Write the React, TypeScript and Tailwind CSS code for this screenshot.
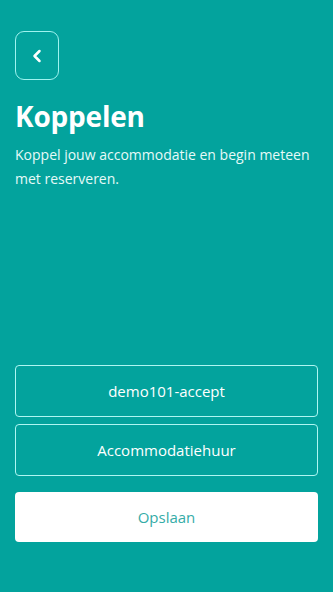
import { ChevronLeft } from 'lucide-react'

export default function App() {
  return (
    <div
      className="min-h-[592px] w-full bg-[#03a39d] flex flex-col px-[15px] pt-[31px] pb-[50px] text-white"
      style={{ fontFamily: '"Open Sans", "Noto Sans", sans-serif' }}
    >
      <button className="w-[44px] h-[49px] rounded-[9px] border border-[#9ff3ef] flex items-center justify-center">
        <ChevronLeft size={20} strokeWidth={3} className="text-white" />
      </button>

      <h1 className="mt-[18px] text-[28px] leading-[36px] font-bold tracking-[-0.2px]">Koppelen</h1>
      <p className="mt-[9px] text-[14px] leading-[24px] text-[#e6faf8] pr-2">
        Koppel jouw accommodatie en begin meteen met reserveren.
      </p>

      <div className="flex-1" />

      <div className="flex flex-col gap-[7px]">
        <button className="h-[52px] w-full rounded-[4px] border border-[#aef6f2] text-[15px]">
          demo101-accept
        </button>
        <button className="h-[52px] w-full rounded-[4px] border border-[#aef6f2] text-[15px]">
          Accommodatiehuur
        </button>
      </div>

      <button className="mt-[16px] h-[50px] w-full rounded-[4px] bg-white text-[#35aca7] text-[15px]">
        Opslaan
      </button>
    </div>
  )
}
